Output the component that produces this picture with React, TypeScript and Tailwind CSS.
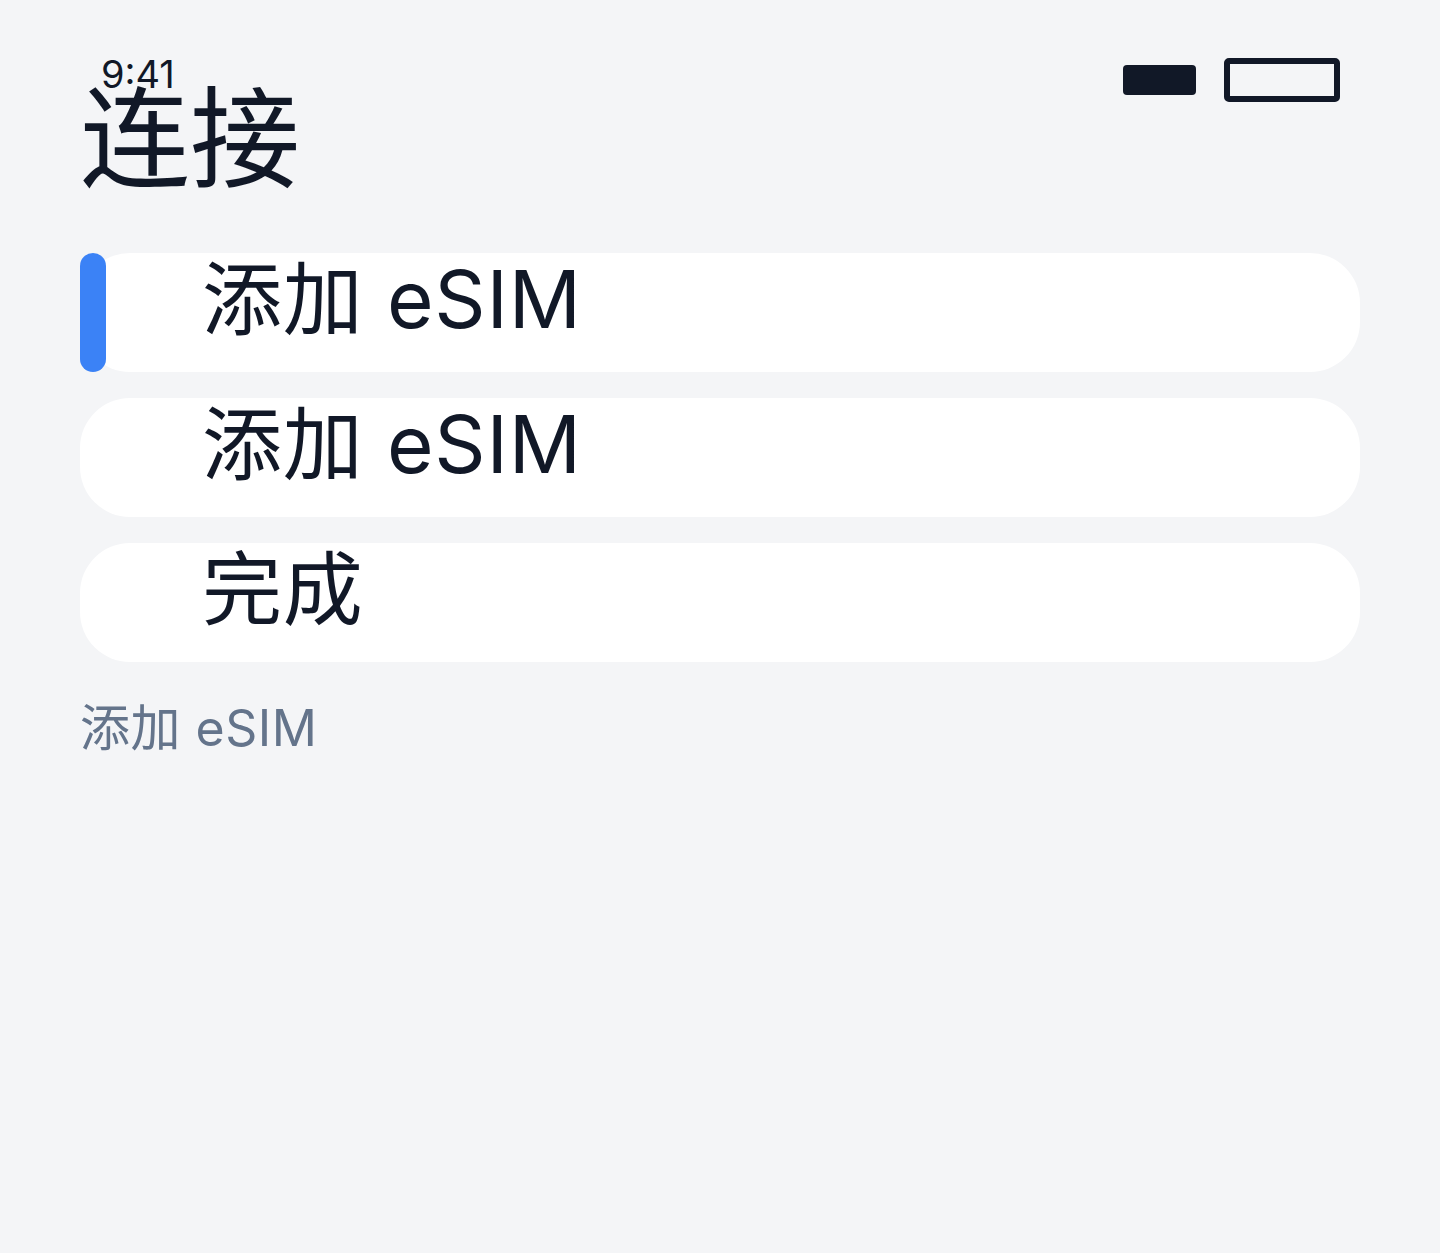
import React from 'react';

const items = [
  { label: '添加 eSIM', active: true },
  { label: '添加 eSIM', active: false },
  { label: '完成', active: false },
];

export default function App() {
  return (
    <div
      className="min-h-[1253px] bg-[#f4f5f7] px-20 text-[#111827]"
      style={{ fontFamily: 'Inter, "Noto Sans CJK SC", sans-serif' }}
    >
      {/* status bar */}
      <div className="relative h-0">
        <span className="absolute left-[21px] top-[55px] text-[38px] leading-none">9:41</span>
        <div className="absolute right-[20px] top-[58px] flex items-center gap-7">
          <div className="h-[30px] w-[73px] rounded-[4px] bg-[#111827]" />
          <div className="h-[44px] w-[116px] rounded-[5px] border-[6px] border-[#111827]" />
        </div>
      </div>

      <h1 className="pt-[74px] text-[110px] leading-[130px] font-normal">连接</h1>

      <div className="mt-[49px] flex flex-col gap-[26px]">
        {items.map((item, i) => (
          <div key={i} className="relative flex h-[119px] items-start rounded-[50px] bg-white pl-[122px] pt-[6px]">
            {item.active && (
              <div className="absolute left-0 top-0 h-full w-[26px] rounded-full bg-[#3b82f6]" />
            )}
            <span className="text-[80px] leading-none tracking-[0.01em]">{item.label}</span>
          </div>
        ))}
      </div>

      <p className="mt-[41px] text-[50px] leading-none tracking-[0.01em] text-[#64748b]">添加 eSIM</p>
    </div>
  );
}
